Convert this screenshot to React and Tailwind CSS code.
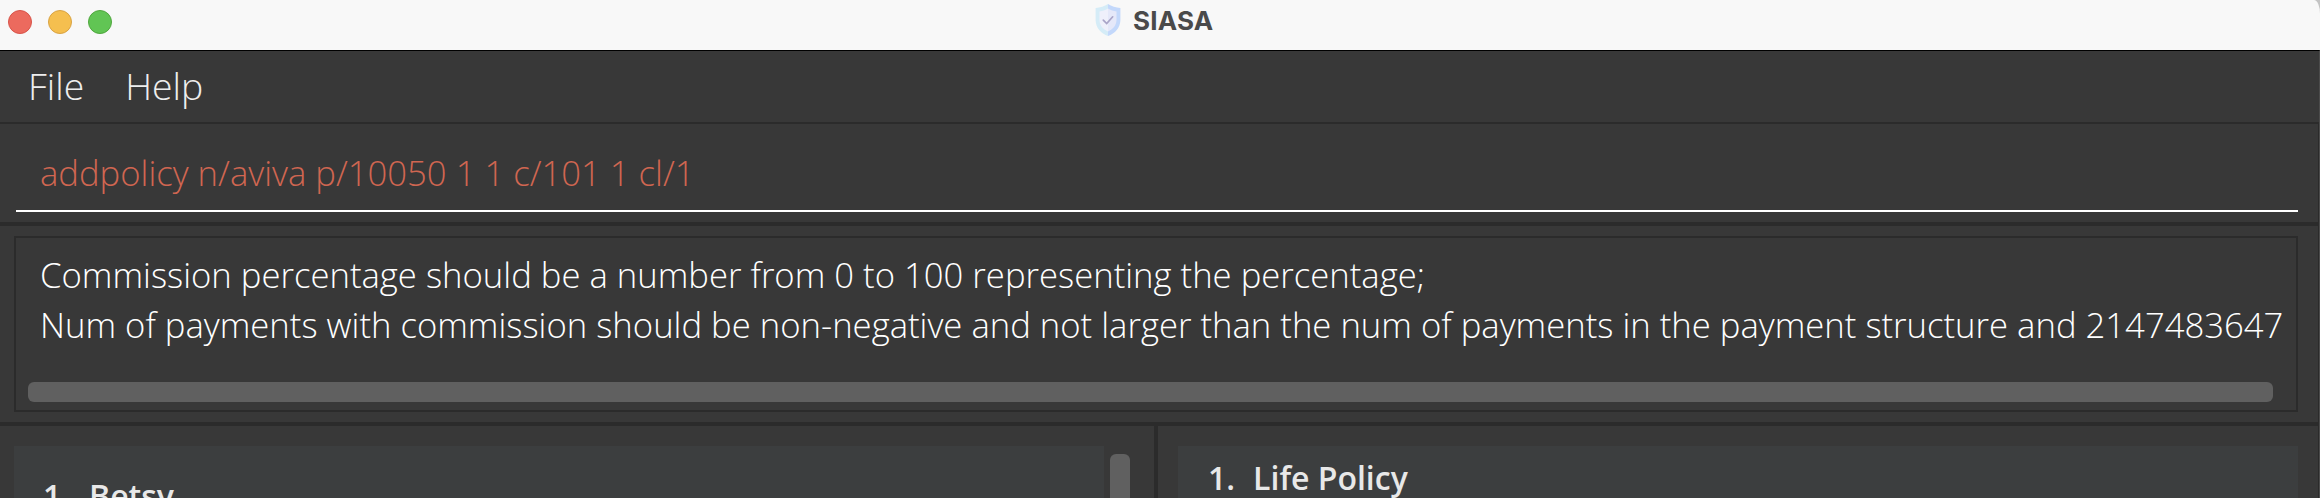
function ShieldIcon() {
  return (
    <svg className="h-8 w-[26px]" viewBox="0 0 26 32">
      <path d="M13 0C9.5 2.2 5 3.6.6 4v12C.8 24 6 29.5 13 32Z" fill="#d5ecf7" />
      <path d="M13 0c3.500 2.200 8 3.600 12.400 4v12C25.200 24 20 29.500 13 32Z" fill="#c3d8fb" />
      <path d="M13 4.500C10.500 6 7.500 7 4.500 7.500V16c.2 5.500 3.500 9.300 8.500 11.500Z" fill="#eff0fb" />
      <path d="M13 4.500c2.500 1.500 5.500 2.500 8.500 3V16c-.2 5.500-3.500 9.300-8.500 11.500Z" fill="#e5e8f9" />
      <path d="M8.300 16.200l3.400 3.400 6-6.800" fill="none" stroke="#aaa5c8" strokeWidth="1.700" strokeLinecap="round" />
    </svg>
  );
}

function TitleBar() {
  return (
    <header className="h-[50px] shrink-0 bg-[#c4c4c4]">
      <div className="flex h-full items-start [border-top-right-radius:6px_14px] bg-[#f8f8f8] pl-2">
        <div className="mt-2.5 flex w-[1087px] gap-4">
          <span className="size-6 rounded-full border border-[#d8544a] bg-[#ec6a5e]" />
          <span className="size-6 rounded-full border border-[#d9a344] bg-[#f5bf4f]" />
          <span className="size-6 rounded-full border border-[#50a73e] bg-[#61c554]" />
        </div>
        <div className="mt-1 flex">
          <ShieldIcon />
          <span className="ml-3 mt-px font-['Inter',sans-serif] text-[26px] leading-8 font-bold tracking-[0.2px] text-[#4a4a4a]">SIASA</span>
        </div>
      </div>
    </header>
  );
}

export default function App() {
  return (
    <div className="flex h-[498px] w-[2320px] flex-col overflow-hidden bg-[#383838] font-['Open_Sans',sans-serif] font-light">
      <TitleBar />
      <nav className="flex h-[72px] shrink-0 gap-[41px] border-t border-black border-r border-r-[#4b4b4b] pl-[28px] pt-[10px] text-[37.33px] leading-[50px] text-[#eeeeee]">
        <span>File</span>
        <span>Help</span>
      </nav>
      <div className="flex min-h-0 flex-1 flex-col border-r border-[#4b4b4b]">
        <div className="flex min-h-0 flex-1 flex-col border-t-2 border-r border-[#2b2b2b]">
          <div className="h-[102px] shrink-0 border-b-4 border-[#2b2b2b] pl-4 pr-5">
            <div className="h-[88px] border-b-2 border-white pl-6 pt-6 text-[34.67px] leading-[50px] text-[#d06651]">
              addpolicy n/aviva p/10050 1 1 c/101 1 cl/1
            </div>
          </div>
          <div className="h-[200px] shrink-0 border-b-4 border-[#2b2b2b] pt-2.5 pr-5 pl-3.5">
            <div className="h-44 border-2 border-[#2b2b2b] px-3 pt-3">
              <div className="pl-3 text-[34.67px] leading-[50px] whitespace-nowrap text-white">
                <p>Commission percentage should be a number from 0 to 100 representing the percentage;</p>
                <p>Num of payments with commission should be non-negative and not larger than the num of payments in the payment structure and 2147483647</p>
              </div>
              <div className="mt-8 h-5 w-[2245px] rounded-md bg-[#606060]" />
            </div>
          </div>
          <main className="flex min-h-0 flex-1 font-semibold text-[#e8e8e8]">
            <section className="flex w-[1158px] gap-1.5 border-r-4 border-[#2b2b2b] pt-5 pl-3.5 text-[32px] leading-[44px]">
              <div className="flex w-[1090px] gap-[19px] bg-[#3c3e3f] pt-7 pl-[29px]">
                <span>1.</span>
                <span>Betsy</span>
              </div>
              <div className="mt-2 w-5 rounded-t-md bg-[#606060]" />
            </section>
            <section className="flex-1 pt-5 pr-5 pl-5 text-[32px] leading-[44px]">
              <div className="flex h-full gap-[18px] bg-[#3c3e3f] pt-[10px] pl-[30px]">
                <span>1.</span>
                <span>Life Policy</span>
              </div>
            </section>
          </main>
        </div>
      </div>
    </div>
  );
}
